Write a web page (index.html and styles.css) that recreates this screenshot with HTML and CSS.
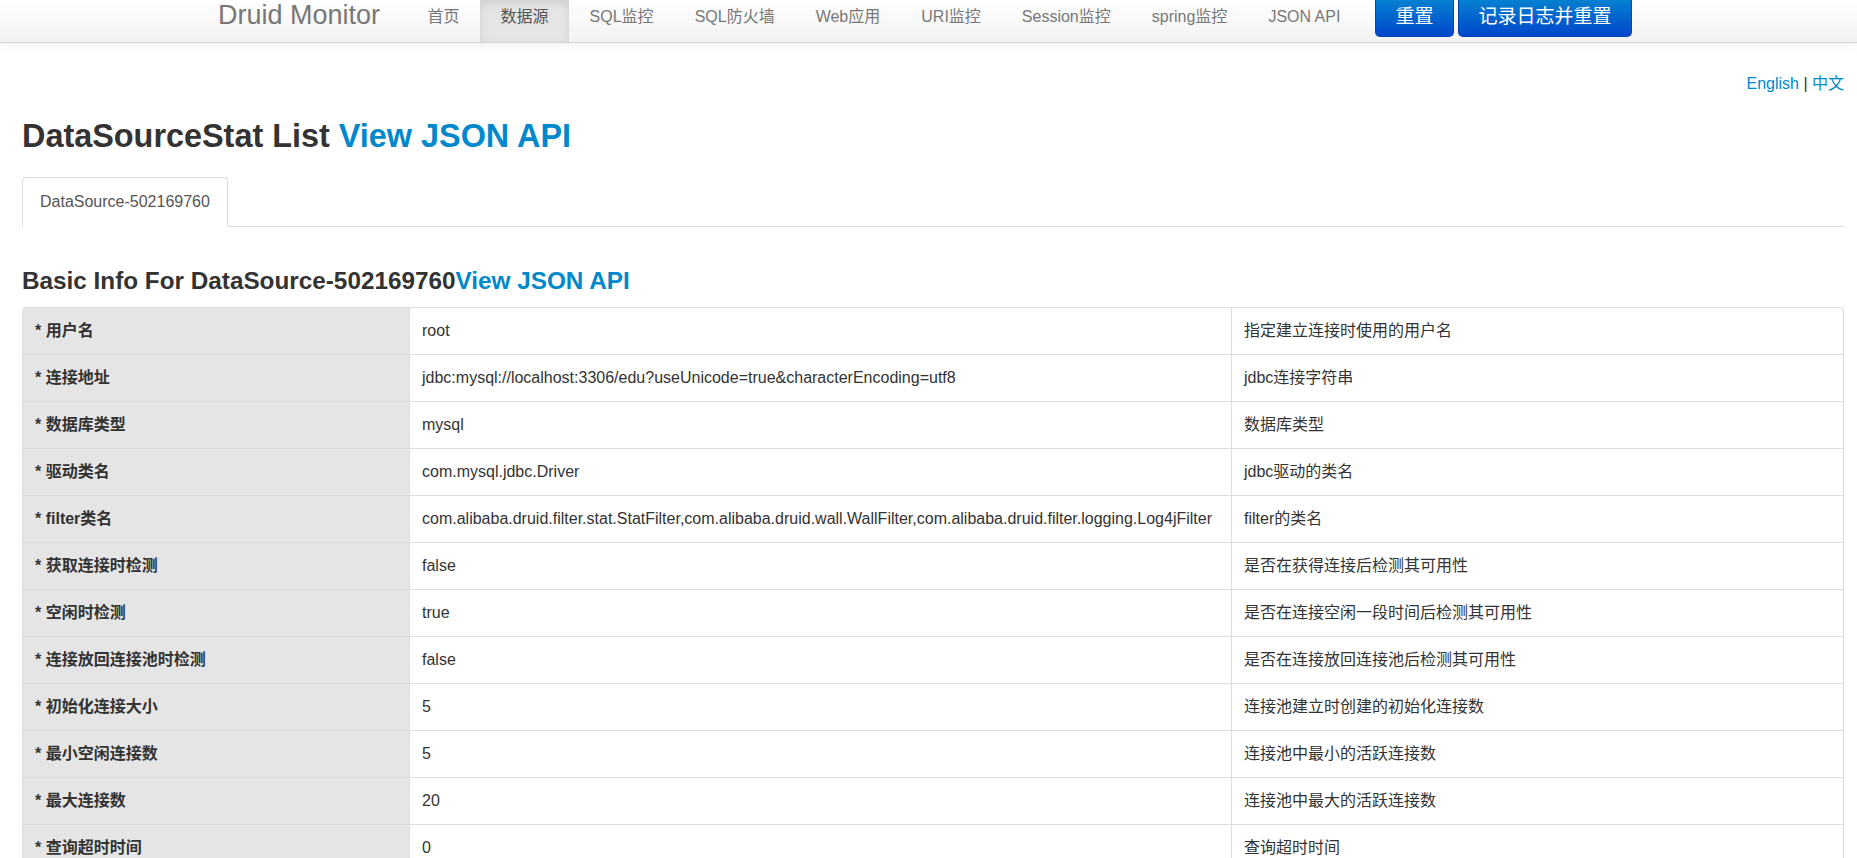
FILE: index.html
```html
<!DOCTYPE html>
<html lang="zh-CN">
<head>
<meta charset="utf-8">
<title>Druid Monitor</title>
<link rel="stylesheet" href="styles.css">
</head>
<body>
<header class="navbar">
  <div class="navbar-inner">
    <a class="brand" href="#">Druid Monitor</a>
    <ul class="nav">
      <li><a href="#">首页</a></li>
      <li class="active"><a href="#">数据源</a></li>
      <li><a href="#">SQL监控</a></li>
      <li><a href="#">SQL防火墙</a></li>
      <li><a href="#">Web应用</a></li>
      <li><a href="#">URI监控</a></li>
      <li><a href="#">Session监控</a></li>
      <li><a href="#">spring监控</a></li>
      <li><a href="#">JSON API</a></li>
    </ul>
    <div class="actions">
      <a class="btn" href="#">重置</a>
      <a class="btn" href="#">记录日志并重置</a>
    </div>
  </div>
</header>
<main class="page">
  <div class="lang"><a href="#">English</a> | <a href="#">中文</a></div>
  <h1 class="title">DataSourceStat List <a href="#">View JSON API</a></h1>
  <ul class="tabs">
    <li class="tab active"><a href="#">DataSource-502169760</a></li>
  </ul>
  <h3 class="subtitle">Basic Info For DataSource-502169760<a href="#">View JSON API</a></h3>
  <table class="info">
    <colgroup>
      <col class="c-name">
      <col class="c-value">
      <col class="c-desc">
    </colgroup>
    <tbody>
      <tr><th>* 用户名</th><td>root</td><td>指定建立连接时使用的用户名</td></tr>
      <tr><th>* 连接地址</th><td>jdbc:mysql://localhost:3306/edu?useUnicode=true&amp;characterEncoding=utf8</td><td>jdbc连接字符串</td></tr>
      <tr><th>* 数据库类型</th><td>mysql</td><td>数据库类型</td></tr>
      <tr><th>* 驱动类名</th><td>com.mysql.jdbc.Driver</td><td>jdbc驱动的类名</td></tr>
      <tr><th>* filter类名</th><td>com.alibaba.druid.filter.stat.StatFilter,com.alibaba.druid.wall.WallFilter,com.alibaba.druid.filter.logging.Log4jFilter</td><td>filter的类名</td></tr>
      <tr><th>* 获取连接时检测</th><td>false</td><td>是否在获得连接后检测其可用性</td></tr>
      <tr><th>* 空闲时检测</th><td>true</td><td>是否在连接空闲一段时间后检测其可用性</td></tr>
      <tr><th>* 连接放回连接池时检测</th><td>false</td><td>是否在连接放回连接池后检测其可用性</td></tr>
      <tr><th>* 初始化连接大小</th><td>5</td><td>连接池建立时创建的初始化连接数</td></tr>
      <tr><th>* 最小空闲连接数</th><td>5</td><td>连接池中最小的活跃连接数</td></tr>
      <tr><th>* 最大连接数</th><td>20</td><td>连接池中最大的活跃连接数</td></tr>
      <tr><th>* 查询超时时间</th><td>0</td><td>查询超时时间</td></tr>
      <tr><th>* 事务查询超时时间</th><td>0</td><td>事务查询超时时间</td></tr>
      <tr><th>* 登录超时时间</th><td>0</td><td>登录超时时间</td></tr>
    </tbody>
  </table>
</main>
</body>
</html>
```

FILE: styles.css
```css
* { box-sizing: border-box; }

body {
  margin: 0;
  font-family: "Liberation Sans", Arial, "Noto Sans CJK SC", sans-serif;
  font-size: 16px;
  line-height: 22px;
  color: #333;
  background: #fff;
}

a { color: #0088cc; text-decoration: none; }

/* ---------- navbar ---------- */
.navbar {
  height: 43px;
  background: linear-gradient(to bottom, #ffffff, #f2f2f2);
  border-bottom: 1px solid #d4d4d4;
  box-shadow: 0 1px 10px rgba(0, 0, 0, 0.08);
}

.navbar-inner {
  display: flex;
  align-items: flex-start;
  height: 42px;
  padding-left: 198px;
}

.brand {
  font-size: 27px;
  line-height: 31px;
  color: #777;
  padding: 0 20px;
  margin-right: 7px;
}

.nav {
  display: flex;
  list-style: none;
  margin: 0;
  padding: 0;
  height: 42px;
}

.nav li a {
  display: block;
  height: 42px;
  padding: 0 20.5px;
  line-height: 33px;
  color: #777;
}

.nav li.active a {
  background: #e5e5e5;
  color: #555;
  box-shadow: inset 0 3px 8px rgba(0, 0, 0, 0.1);
}

.actions {
  display: flex;
  gap: 4px;
  margin-left: 14px;
}

.btn {
  display: block;
  height: 37px;
  padding: 0 19.5px;
  font-size: 19px;
  line-height: 34px;
  color: #fff;
  background: linear-gradient(to bottom, #0580d0, #0046cb);
  border: 1px solid #0044bb;
  border-top: 0;
  border-radius: 0 0 5px 5px;
}

/* ---------- page ---------- */
.page {
  padding: 0 13px 0 22px;
}

.lang {
  margin-top: 30px;
  text-align: right;
  line-height: 22px;
}

.title {
  margin: 21px 0 0;
  font-size: 32.4px;
  line-height: 40px;
  font-weight: bold;
  color: #333;
}

.tabs {
  list-style: none;
  margin: 21px 0 0;
  padding: 0;
  display: flex;
  border-bottom: 1px solid #ddd;
}

.tab {
  margin-bottom: -1px;
}

.tab a {
  display: block;
  padding: 13px 17px;
  line-height: 22px;
  color: #555;
  background: #fff;
  border: 1px solid #ddd;
  border-bottom-color: transparent;
  border-radius: 4px 4px 0 0;
}

.subtitle {
  margin: 39px 0 0;
  font-size: 24.3px;
  line-height: 30px;
  font-weight: bold;
  color: #333;
}

/* ---------- table ---------- */
.info {
  margin-top: 11px;
  width: 100%;
  table-layout: fixed;
  border-collapse: separate;
  border-spacing: 0;
  border: 1px solid #ddd;
  border-left: 0;
  border-radius: 4px;
}

.c-name { width: 387px; }
.c-value { width: 822px; }

.info th,
.info td {
  padding: 12px 11px 12px 12px;
  line-height: 22px;
  text-align: left;
  vertical-align: top;
  border-left: 1px solid #ddd;
  border-top: 1px solid #ddd;
  white-space: nowrap;
}

.info tr:first-child th,
.info tr:first-child td {
  border-top: 0;
}

.info th {
  background: #e5e5e5;
  font-weight: bold;
  color: #333;
}

.info td {
  font-weight: normal;
  color: #333;
}

.info tr:first-child th { border-top-left-radius: 4px; }
```
